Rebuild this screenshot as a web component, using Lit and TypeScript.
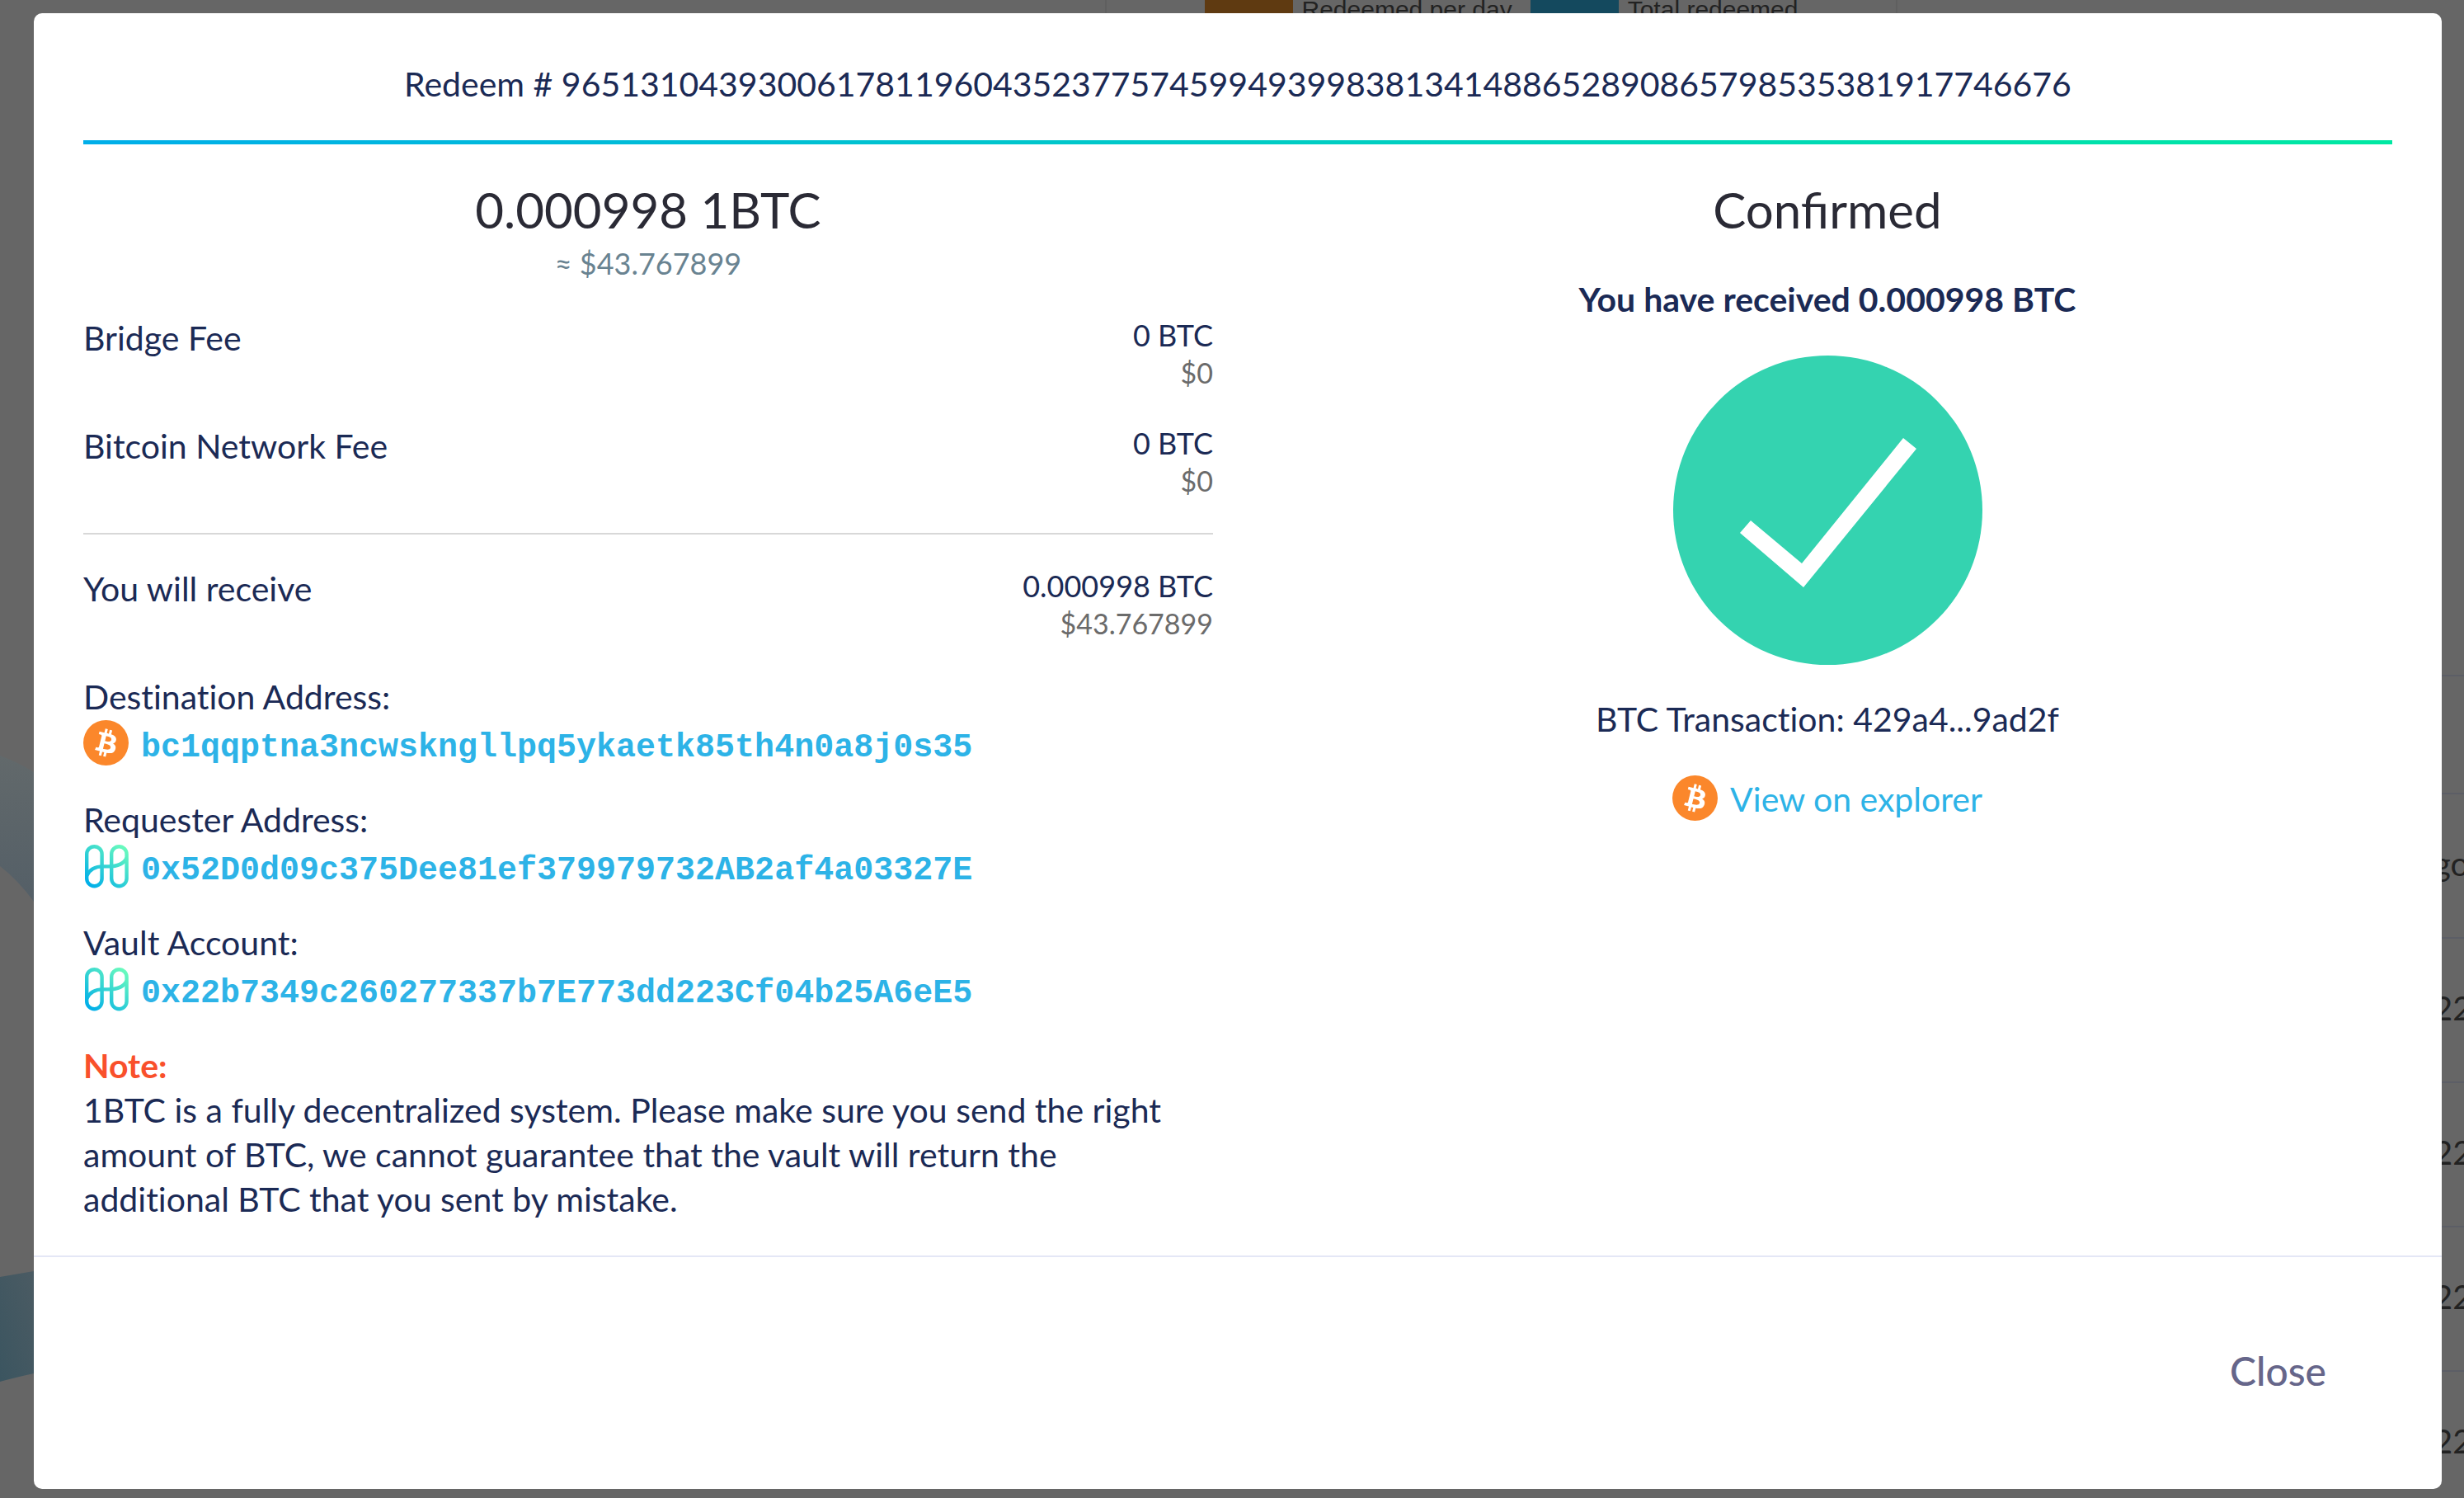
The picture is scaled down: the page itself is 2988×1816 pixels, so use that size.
import { LitElement, html, css, svg } from "lit";
import { customElement, property } from "lit/decorators.js";

@customElement("bitcoin-icon")
export class BitcoinIcon extends LitElement {
  static styles = css`
    :host {
      display: block;
      width: 55px;
      height: 55px;
      flex: none;
    }
    svg {
      display: block;
      width: 100%;
      height: 100%;
    }
  `;

  render() {
    return html`<svg viewBox="0 0 32 32" aria-hidden="true">
      <circle cx="16" cy="16" r="16" fill="#fb872b" />
      <path
        fill="#fff"
        d="M23.189 14.02c.314-2.096-1.283-3.223-3.465-3.975l.708-2.84-1.728-.43-.69 2.765c-.454-.114-.92-.22-1.385-.326l.695-2.783L15.596 6l-.708 2.839c-.376-.086-.746-.17-1.104-.26l.002-.009-2.384-.595-.46 1.846s1.283.294 1.256.312c.7.175.826.638.805 1.006l-.806 3.235c.048.012.11.03.18.057l-.183-.045-1.13 4.532c-.086.212-.303.531-.793.41.018.025-1.256-.313-1.256-.313l-.858 1.978 2.25.561c.418.105.828.215 1.231.318l-.715 2.872 1.727.43.708-2.84c.472.127.93.245 1.378.357l-.706 2.828 1.728.43.715-2.866c2.948.558 5.164.333 6.097-2.333.752-2.146-.037-3.385-1.588-4.192 1.13-.26 1.98-1.003 2.207-2.538zm-3.95 5.538c-.533 2.147-4.148.986-5.32.695l.95-3.805c1.172.293 4.929.872 4.37 3.11zm.535-5.569c-.487 1.953-3.495.96-4.47.717l.86-3.45c.975.243 4.118.696 3.61 2.733z"
      />
    </svg>`;
  }
}

@customElement("harmony-icon")
export class HarmonyIcon extends LitElement {
  static styles = css`
    :host {
      display: block;
      width: 55px;
      height: 55px;
      flex: none;
    }
    svg {
      display: block;
      width: 100%;
      height: 100%;
    }
  `;

  render() {
    return html`<svg viewBox="0 0 55 55" aria-hidden="true">
      <defs>
        <linearGradient id="g" gradientUnits="userSpaceOnUse" x1="8" y1="52" x2="48" y2="4">
          <stop offset="0" stop-color="#00aee9" />
          <stop offset="1" stop-color="#69fabd" />
        </linearGradient>
      </defs>
      <g fill="none" stroke="url(#g)" stroke-width="4.4">
        <rect x="4.2" y="4.2" width="18.4" height="48" rx="9.2" />
        <rect x="34.2" y="4.2" width="18.4" height="48" rx="9.2" />
        <path d="M4.2 39.5C8 31.5 15 28.4 24 28.4h6C40 28.4 49 26 52.6 18" />
      </g>
    </svg>`;
  }
}

@customElement("amount-row")
export class AmountRow extends LitElement {
  @property() label = "";
  @property() amount = "";
  @property() usd = "";

  static styles = css`
    :host {
      display: flex;
      justify-content: space-between;
      color: #1b2a55;
      font-size: 41px;
      line-height: 54px;
    }
    .values {
      text-align: right;
      font-size: 36px;
      line-height: 46px;
    }
    .usd {
      color: #6b6b6b;
      font-size: 34px;
    }
  `;

  render() {
    return html`
      <span>${this.label}</span>
      <div class="values">
        <div>${this.amount}</div>
        <div class="usd">${this.usd}</div>
      </div>
    `;
  }
}

const ADDRESSES = [
  { label: "Destination Address:", value: "bc1qqptna3ncwskngllpq5ykaetk85th4n0a8j0s35", chain: "btc" },
  { label: "Requester Address:", value: "0x52D0d09c375Dee81ef379979732AB2af4a03327E", chain: "one" },
  { label: "Vault Account:", value: "0x22b7349c260277337b7E773dd223Cf04b25A6eE5", chain: "one" },
];

const SIDE_CELLS = ["go", "22", "22", "22", "22"];

const bands = svg`
  <defs>
    <linearGradient id="upper" x1="0" y1="0" x2="0" y2="1">
      <stop offset="0" stop-color="#62696b" />
      <stop offset="1" stop-color="#545f67" />
    </linearGradient>
    <linearGradient id="lower" x1="1" y1="0" x2="0" y2="1">
      <stop offset="0" stop-color="#4b5b63" />
      <stop offset="1" stop-color="#3b5560" />
    </linearGradient>
  </defs>
  <path d="M0 916Q22 924 41 936V1093Q22 1067 0 1050Z" fill="url(#upper)" />
  <path d="M0 1548L41 1541V1665Q18 1670 0 1675Z" fill="url(#lower)" />
`;

@customElement("app-root")
export class AppRoot extends LitElement {
  static styles = css`
    :host {
      display: block;
      position: relative;
      box-sizing: border-box;
      min-height: 100vh;
      padding: 16px 27px 11px 41px;
      background: #666;
      color: #1b2a55;
      font-family: Lato, "Open Sans", sans-serif;
      font-size: 41px;
      line-height: 54px;
      font-variant-ligatures: none;
    }
    .page {
      position: absolute;
      inset: 0;
      display: flex;
      flex-direction: column;
      overflow: hidden;
      color: #222;
    }
    .bands {
      position: absolute;
      left: 0;
      top: 0;
      width: 41px;
      height: 1816px;
    }
    .top {
      display: grid;
      grid-template-columns: 1340fr 961fr 687fr;
      height: 40px;
      flex: none;
    }
    .legend {
      grid-column: 2;
      display: flex;
      justify-content: center;
      gap: 22px;
      border: 0 solid #5f5f5f;
      border-width: 0 2px;
      font-family: "Liberation Sans", Arial, sans-serif;
      font-size: 30px;
      line-height: 24px;
    }
    .key {
      display: flex;
      gap: 11px;
    }
    .swatch {
      width: 107px;
      background: #5f3a11;
    }
    .swatch.total {
      background: #14495e;
    }
    .side {
      flex: 1;
      align-self: flex-end;
      width: 37px;
      padding-top: 778px;
      font-size: 40px;
      line-height: 168px;
      white-space: nowrap;
    }
    .head {
      height: 141px;
      border-top: 2px solid #5c5e66;
    }
    .cell {
      height: 173px;
      border-top: 2px solid #5c5e66;
    }
    .strip {
      display: flex;
      gap: 107px;
      height: 11px;
      padding-left: 69px;
    }
    .block {
      width: 121px;
      background: #3f5a66;
    }
    .rule {
      width: 2px;
      background: #5c5c5e;
    }
    .modal {
      position: relative;
      border-radius: 10px;
      background: #fff;
    }
    .body {
      padding: 59px 60px 41px;
    }
    h1,
    h2,
    p {
      margin: 0;
      font-weight: 400;
    }
    h1 {
      padding-bottom: 41px;
      border-bottom: 5px solid;
      border-image: linear-gradient(90deg, #00aee9, #00e8a2) 1;
      font-size: 41px;
      text-align: center;
    }
    .columns {
      display: grid;
      grid-template-columns: 1fr 1fr;
      gap: 60px;
      padding-top: 41px;
    }
    h2 {
      color: #2a2a35;
      font-size: 60px;
      line-height: 76px;
      text-align: center;
      font-variant-ligatures: normal;
    }
    .approx {
      color: #698391;
      font-size: 36px;
      text-align: center;
    }
    .fees {
      display: grid;
      gap: 39px;
      padding: 37px 0 40px;
    }
    .total-row {
      padding: 39px 0;
      border-top: 2px solid #d8d8d8;
    }
    .details {
      display: grid;
      gap: 26px;
    }
    .address {
      display: flex;
      gap: 15px;
      padding-top: 1px;
      color: #2db3e7;
      font: bold 40px/68px "Liberation Mono", "Courier New", monospace;
      text-decoration: none;
    }
    .note {
      padding-right: 40px;
    }
    .note-title {
      color: #f9502b;
      font-weight: 700;
    }
    .status {
      display: flex;
      flex-direction: column;
      align-items: center;
    }
    .received {
      padding: 44px 0 41px;
      font-weight: 700;
    }
    .check {
      display: block;
      width: 375px;
      height: 375px;
    }
    .tx {
      padding: 39px 0 41px;
    }
    .explorer {
      display: flex;
      gap: 15px;
      color: #2db3e7;
      line-height: 58px;
      text-decoration: none;
    }
    footer {
      display: flex;
      justify-content: flex-end;
      padding: 78px 60px 83px;
      border-top: 2px solid #e4e7f6;
    }
    button {
      padding: 30px 80px;
      border: 0;
      background: none;
      color: #66668a;
      font: 500 48px/60px Lato, "Open Sans", sans-serif;
      cursor: pointer;
    }
  `;

  render() {
    return html`
      <div class="page" aria-hidden="true">
        <svg class="bands" viewBox="0 0 41 1816">${bands}</svg>
        <div class="top">
          <div class="legend">
            <div class="key"><span class="swatch"></span>Redeemed per day</div>
            <div class="key"><span class="swatch total"></span>Total redeemed</div>
          </div>
        </div>
        <div class="side">
          <div class="head"></div>
          ${SIDE_CELLS.map((text) => html`<div class="cell">${text}</div>`)}
        </div>
        <div class="strip">
          <span class="block"></span>
          <span class="rule"></span>
        </div>
      </div>

      <div class="modal" role="dialog" aria-modal="true" aria-labelledby="title">
        <div class="body">
          <h1 id="title">
            Redeem # 96513104393006178119604352377574599493998381341488652890865798535381917746676
          </h1>
          <div class="columns">
            <section>
              <h2>0.000998 1BTC</h2>
              <p class="approx">≈ $43.767899</p>
              <div class="fees">
                <amount-row label="Bridge Fee" amount="0 BTC" usd="$0"></amount-row>
                <amount-row label="Bitcoin Network Fee" amount="0 BTC" usd="$0"></amount-row>
              </div>
              <div class="total-row">
                <amount-row label="You will receive" amount="0.000998 BTC" usd="$43.767899"></amount-row>
              </div>
              <div class="details">
                ${ADDRESSES.map(
                  (a) => html`<div>
                    <div>${a.label}</div>
                    <a class="address" href="#">
                      ${a.chain === "btc"
                        ? html`<bitcoin-icon></bitcoin-icon>`
                        : html`<harmony-icon></harmony-icon>`}
                      <span>${a.value}</span>
                    </a>
                  </div>`
                )}
                <div class="note">
                  <p class="note-title">Note:</p>
                  <p>
                    1BTC is a fully decentralized system. Please make sure you send the right
                    amount of BTC, we cannot guarantee that the vault will return the additional
                    BTC that you sent by mistake.
                  </p>
                </div>
              </div>
            </section>
            <section class="status">
              <h2>Confirmed</h2>
              <p class="received">You have received 0.000998 BTC</p>
              <svg class="check" viewBox="0 0 375 375" aria-hidden="true">
                <circle cx="187.5" cy="187.5" r="187.5" fill="#34d3b0" />
                <path fill="#fff" d="M81 215L94 200L156 252L279 100L295 113L158 281Z" />
              </svg>
              <p class="tx">BTC Transaction: 429a4...9ad2f</p>
              <a class="explorer" href="#"><bitcoin-icon></bitcoin-icon>View on explorer</a>
            </section>
          </div>
        </div>
        <footer><button type="button">Close</button></footer>
      </div>
    `;
  }
}
